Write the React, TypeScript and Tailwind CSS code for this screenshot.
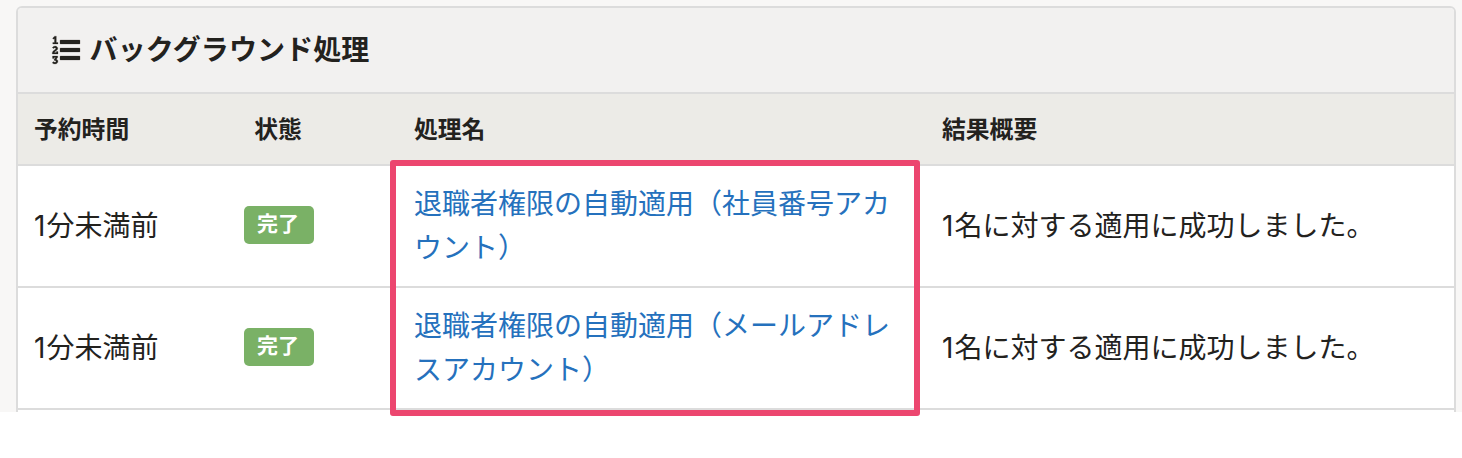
const rows = [
  { time: '1分未満前', status: '完了', name: ['退職者権限の自動適用（社員番号アカ', 'ウント）'], result: '1名に対する適用に成功しました。' },
  { time: '1分未満前', status: '完了', name: ['退職者権限の自動適用（メールアドレ', 'スアカウント）'], result: '1名に対する適用に成功しました。' },
];

function ListOlIcon() {
  return (
    <svg
      viewBox="0 0 1792 1792"
      className="h-7 w-7 shrink-0 overflow-visible"
      fill="currentColor"
      stroke="currentColor"
      strokeWidth="14"
      aria-hidden="true"
    >
      <path d="M381 1620q0 80-54.5 126t-135.5 46q-106 0-172-66l57-88q49 45 106 45 29 0 50.5-14.5t21.5-42.5q0-64-105-56l-26-56q8-10 32.5-43.5t42.5-54 37-38.5v-1q-16 0-48.5 1t-48.5 1v53h-106v-152h333v88l-95 115q51 12 81 49t30 88zm2-627v159h-362q-6-36-6-54 0-51 23.5-93t56.5-68 66-47.5 56.5-43.5 23.5-45q0-25-14.5-38.5t-39.5-13.5q-46 0-81 58l-85-59q24-51 71.5-79.5t105.5-28.5q73 0 123 41.5t50 112.5q0 50-34 91.5t-75 64.5-75.5 50.5-35.5 52.5h127v-60h105zm1409 319v192q0 13-9.5 22.5t-22.5 9.5h-1216q-13 0-22.5-9.5t-9.5-22.5v-192q0-14 9-23t23-9h1216q13 0 22.5 9.5t9.5 22.5zm-1408-899v99h-335v-99h107q0-41 .5-121.5t.5-121.5v-12h-2q-8 17-50 54l-71-76 136-127h106v404h108zm1408 387v192q0 13-9.5 22.5t-22.5 9.5h-1216q-13 0-22.5-9.5t-9.5-22.5v-192q0-14 9-23t23-9h1216q13 0 22.5 9.5t9.5 22.5zm0-512v192q0 13-9.5 22.5t-22.5 9.5h-1216q-13 0-22.5-9.5t-9.5-22.5v-192q0-14 9-23t23-9h1216q13 0 22.5 9.5t9.5 22.5z" />
    </svg>
  );
}

export default function App() {
  return (
    <div className="h-[458px] w-[1462px] overflow-hidden bg-white font-['Inter','Noto_Sans_CJK_JP',sans-serif] text-[#23221e]">
      <div className="relative h-[416px]">
        <div className="h-[412px] overflow-hidden bg-[#f8f7f6] pt-1.5 pr-1.5 pl-4">
          <section className="h-[440px] overflow-hidden rounded-md border-2 border-[#dcdcdc] bg-white">
            <header className="flex h-[86px] items-center gap-2.5 border-b-2 border-[#dcdcdc] bg-[#f2f1f0] pl-[33.6px]">
              <ListOlIcon />
              <h1 className="text-[28px] leading-10 font-bold tracking-[0.1px]">バックグラウンド処理</h1>
            </header>
            <div className="grid h-[72px] grid-cols-[142px_238px_528px_1fr] items-center border-b-2 border-[#dcdcdc] bg-[#ecebe7] pt-0.5 text-[23.8px] leading-9 font-bold">
              <div className="px-4 whitespace-nowrap">予約時間</div>
              <div className="pr-0.5 text-center">状態</div>
              <div className="px-4">処理名</div>
              <div className="px-4">結果概要</div>
            </div>
            {rows.map((row) => (
              <div
                key={row.name[0]}
                className="grid h-[122px] grid-cols-[142px_238px_528px_1fr] items-center border-b-2 border-[#dcdcdc] text-[28px] leading-[44px]"
              >
                <div className="px-4 whitespace-nowrap">
                  <span className="tracking-[1px]">{row.time.slice(0, 1)}</span>
                  {row.time.slice(1)}
                </div>
                <div className="flex justify-center pb-0.5">
                  <span className="flex h-[38px] w-[70px] items-center justify-center rounded-[5px] bg-[#7ab166] pr-0.5 pb-0.5 text-[21px] leading-8 font-bold text-white">
                    {row.status}
                  </span>
                </div>
                <a className="px-4 whitespace-nowrap text-[#2571bd]">
                  {row.name[0]}
                  <br />
                  {row.name[1]}
                </a>
                <div className="px-4 whitespace-nowrap">
                  <span className="tracking-[1px]">{row.result.slice(0, 1)}</span>
                  {row.result.slice(1)}
                </div>
              </div>
            ))}
          </section>
        </div>
        <div className="pointer-events-none absolute top-[160px] left-[390px] h-[256px] w-[530px] rounded-[3px] border-6 border-[#ec466f]" />
      </div>
    </div>
  );
}
